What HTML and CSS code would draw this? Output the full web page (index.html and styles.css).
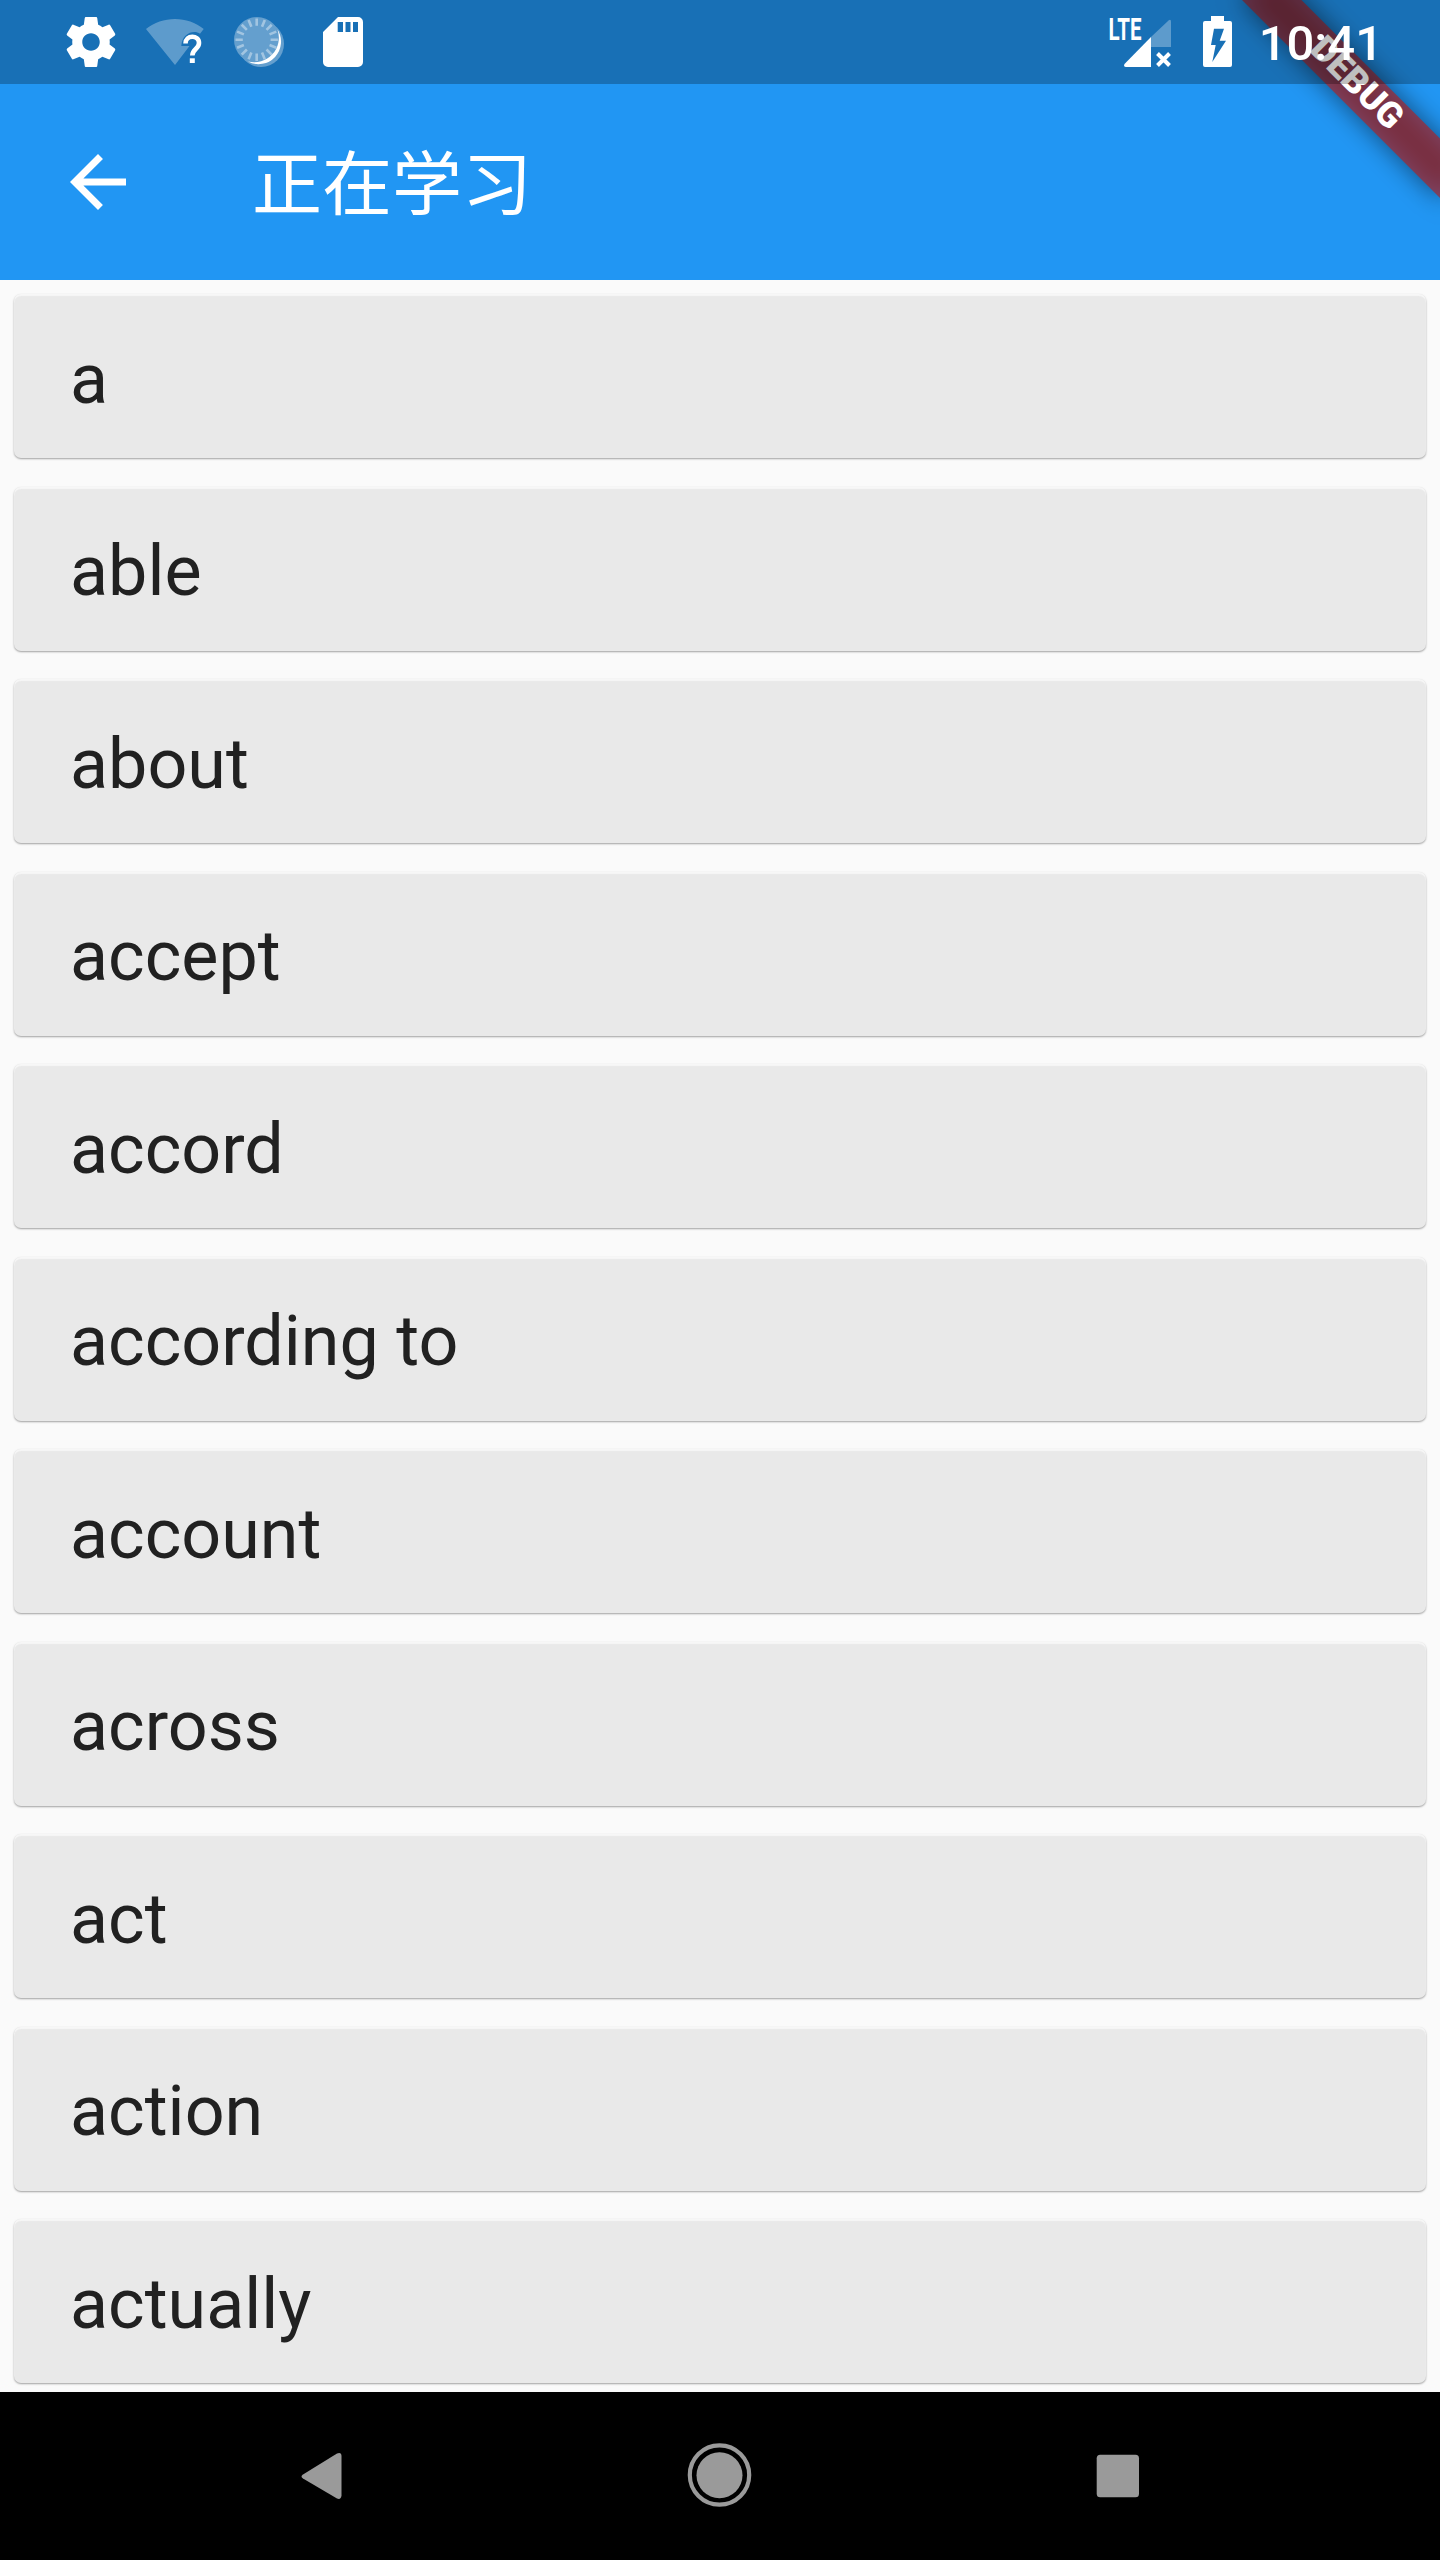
FILE: index.html
```html
<!DOCTYPE html>
<html lang="zh">
<head>
<meta charset="utf-8">
<title>正在学习</title>
<link rel="stylesheet" href="styles.css">
</head>
<body>
<div class="screen">
  <header class="header">
    <div class="statusbar">
      <div class="status-group">
        <svg class="status-icon" viewBox="0 0 24 24" fill="#fff"><path d="M19.43 12.98c.04-.32.07-.64.07-.98s-.03-.66-.07-.98l2.11-1.65c.19-.15.24-.42.12-.64l-2-3.46c-.12-.22-.39-.3-.61-.22l-2.49 1c-.52-.4-1.08-.73-1.69-.98l-.38-2.65C14.46 2.18 14.25 2 14 2h-4c-.25 0-.46.18-.49.42l-.38 2.65c-.61.25-1.17.59-1.69.98l-2.49-1c-.23-.09-.49 0-.61.22l-2 3.46c-.13.22-.07.49.12.64l2.11 1.65c-.04.32-.07.65-.07.98s.03.66.07.98l-2.11 1.65c-.19.15-.24.42-.12.64l2 3.46c.12.22.39.3.61.22l2.49-1c.52.4 1.08.73 1.69.98l.38 2.65c.03.24.24.42.49.42h4c.25 0 .46-.18.49-.42l.38-2.65c.61-.25 1.17-.59 1.69-.98l2.49 1c.23.09.49 0 .61-.22l2-3.46c.12-.22.07-.49-.12-.64l-2.11-1.65zM12 15.5c-1.93 0-3.5-1.57-3.5-3.5s1.57-3.5 3.5-3.5 3.5 1.57 3.5 3.5-1.57 3.5-3.5 3.5z"/></svg>
        <svg class="status-icon" viewBox="0 0 60 60">
          <path d="M30 53L1 17C17 3.500 43 3.500 58.700 17L55 21.700C49 17.500 37 21 36.300 34H44.500Z" fill="#fff" opacity=".3"/>
          <path d="M40.500 31.500C40.500 22.500 54 22.500 54 31C54 37 47.300 37 47.300 43.500" fill="none" stroke="#fff" stroke-width="4.600"/>
          <rect x="44.800" y="46.300" width="5" height="4.700" fill="#fff"/>
        </svg>
        <svg class="status-icon" viewBox="0 0 60 60">
          <g fill="#fff" opacity=".33"><circle cx="28" cy="28" r="23"/><circle cx="32" cy="32" r="23"/></g>
          <path d="M48.500 17.500A22.500 22.500 0 0 1 19 49.500A24.700 24.700 0 0 0 48.500 17.500Z" fill="#fff"/>
          <g stroke="#fff" stroke-width="2.600" opacity=".4">
            <path id="tick" d="M27.700 6.500V13.800M27.700 41.600V48.900"/>
            <use href="#tick" transform="rotate(22.500 27.700 27.700)"/>
            <use href="#tick" transform="rotate(45 27.700 27.700)"/>
            <use href="#tick" transform="rotate(67.500 27.700 27.700)"/>
            <use href="#tick" transform="rotate(90 27.700 27.700)"/>
            <use href="#tick" transform="rotate(112.500 27.700 27.700)"/>
            <use href="#tick" transform="rotate(135 27.700 27.700)"/>
            <use href="#tick" transform="rotate(157.500 27.700 27.700)"/>
          </g>
        </svg>
        <svg class="status-icon" viewBox="0 0 60 60"><path fill="#fff" fill-rule="evenodd" d="M45 5H25L10 20V50A5 5 0 0 0 15 55H45A5 5 0 0 0 50 50V10A5 5 0 0 0 45 5ZM24.700 10H30V20H24.700ZM32.500 10H37.500V20H32.500ZM40 10H45V20H40Z"/></svg>
      </div>
      <div class="status-group status-right">
        <svg class="signal" viewBox="0 0 64 60" fill="#fff">
          <text class="lte" x="0.500" y="28" textLength="33" lengthAdjust="spacingAndGlyphs">LTE</text>
          <path d="M43 25L60.500 8.500Q63 6.500 63 10V35H43Z" opacity=".3"/>
          <path d="M43 25V55H18Q15 54.500 16.500 52Z"/>
          <path d="M49.500 41.500L61.500 53.500M61.500 41.500L49.500 53.500" stroke="#fff" stroke-width="4"/>
        </svg>
        <svg class="battery" viewBox="0 0 30 60"><path fill="#fff" fill-rule="evenodd" d="M8 4H21V9H27Q29 9 29 11V53Q29 55 27 55H2Q0 55 0 53V11Q0 9 2 9H8ZM11 16.700L8 33H12.700L9.300 50L23 28.700H16.700L21 16.700Z"/></svg>
        <span class="clock">10:41</span>
      </div>
    </div>
    <div class="appbar">
      <svg class="back" viewBox="0 0 24 24"><path d="M20 11H7.830l5.590-5.590L12 4l-8 8 8 8 1.410-1.410L7.830 13H20v-2z" fill="#fff"/></svg>
      <h1 class="title">正在学习</h1>
    </div>
    <div class="banner-clip"><div class="banner">DEBUG</div></div>
    <div class="scrim"></div>
  </header>
  <main class="list">
    <div class="card">a</div>
    <div class="card">able</div>
    <div class="card">about</div>
    <div class="card">accept</div>
    <div class="card">accord</div>
    <div class="card">according to</div>
    <div class="card">account</div>
    <div class="card">across</div>
    <div class="card">act</div>
    <div class="card">action</div>
    <div class="card">actually</div>
  </main>
  <nav class="navbar">
    <svg class="nav-icon" viewBox="0 0 66 66"><path d="M15 31.500L49 10.500Q53.500 9 53.500 13V52.500Q53 57 49 55.500L15 35.500Q12 33.500 15 31.500Z" fill="#9a9a9a"/></svg>
    <svg class="nav-icon" viewBox="0 0 66 66"><circle cx="32.500" cy="32" r="29.700" fill="none" stroke="#9a9a9a" stroke-width="4.200"/><circle cx="32.500" cy="32.300" r="23" fill="#9a9a9a"/></svg>
    <svg class="nav-icon" viewBox="0 0 66 66"><rect x="11.700" y="11.700" width="42.300" height="42.500" rx="3.500" fill="#9a9a9a"/></svg>
  </nav>
</div>
</body>
</html>
```
FILE: styles.css
```css
* { box-sizing: border-box; }
body { margin: 0; font-family: Roboto, "Noto Sans CJK SC", sans-serif; }
.screen { width: 1440px; height: 2560px; display: flex; flex-direction: column; background: #fafafa; overflow: hidden; }
.header { position: relative; height: 280px; flex: none; background: #2196f3; color: #fff; }
.statusbar { position: relative; z-index: 3; height: 84px; padding: 0 56px 0 61px; display: flex; align-items: center; justify-content: space-between; }
.status-group { display: flex; align-items: center; gap: 24px; }
.status-icon { width: 60px; height: 60px; display: block; }
.status-right { gap: 0; }
.signal { width: 64px; height: 60px; margin-right: 31px; }
.battery { width: 30px; height: 60px; margin-right: 26px; }
.lte { font-size: 31px; font-weight: 700; }
.clock { margin: 4px 1px 0 0; font-size: 49px; font-weight: 500; line-height: 60px; }
.appbar { height: 196px; display: flex; align-items: center; padding-left: 56px; gap: 112px; }
.back { width: 84px; height: 84px; }
.title { margin: 0; padding-top: 8px; font-size: 70px; font-weight: 400; line-height: 84px; }
.banner-clip { position: absolute; z-index: 1; top: 0; right: 0; width: 320px; height: 280px; overflow: hidden; }
.banner { position: absolute; left: 180px; top: 98px; width: 280px; height: 42px; transform-origin: 140px -98px; transform: rotate(45deg); text-align: center; font-size: 35.7px; font-weight: 900; line-height: 39px; }
.banner::before { content: ""; position: absolute; inset: 0; z-index: -2; background: rgba(0, 0, 0, .5); filter: blur(12.6px); }
.banner::after { content: ""; position: absolute; inset: 0; z-index: -1; background: rgba(183, 28, 28, .627); }
.scrim { position: absolute; z-index: 2; top: 0; left: 0; width: 100%; height: 84px; background: rgba(0, 0, 0, .25); }
.list { flex: 1; padding: 14px; display: flex; flex-direction: column; gap: 28.5px; overflow: hidden; }
.card { flex: none; height: 164px; padding: 2.9px 0 0 56px; border-radius: 7px; background: #e9e9e9; color: #212121; font-size: 70px; line-height: 164px; box-shadow: inset 0 2px 1px rgba(250, 250, 250, .8), 0 1px 2px rgba(0, 0, 0, .36); }
.navbar { flex: none; height: 168px; padding-right: 1px; background: #000; display: flex; align-items: center; justify-content: center; gap: 332.5px; }
.nav-icon { width: 66px; height: 66px; }
```
